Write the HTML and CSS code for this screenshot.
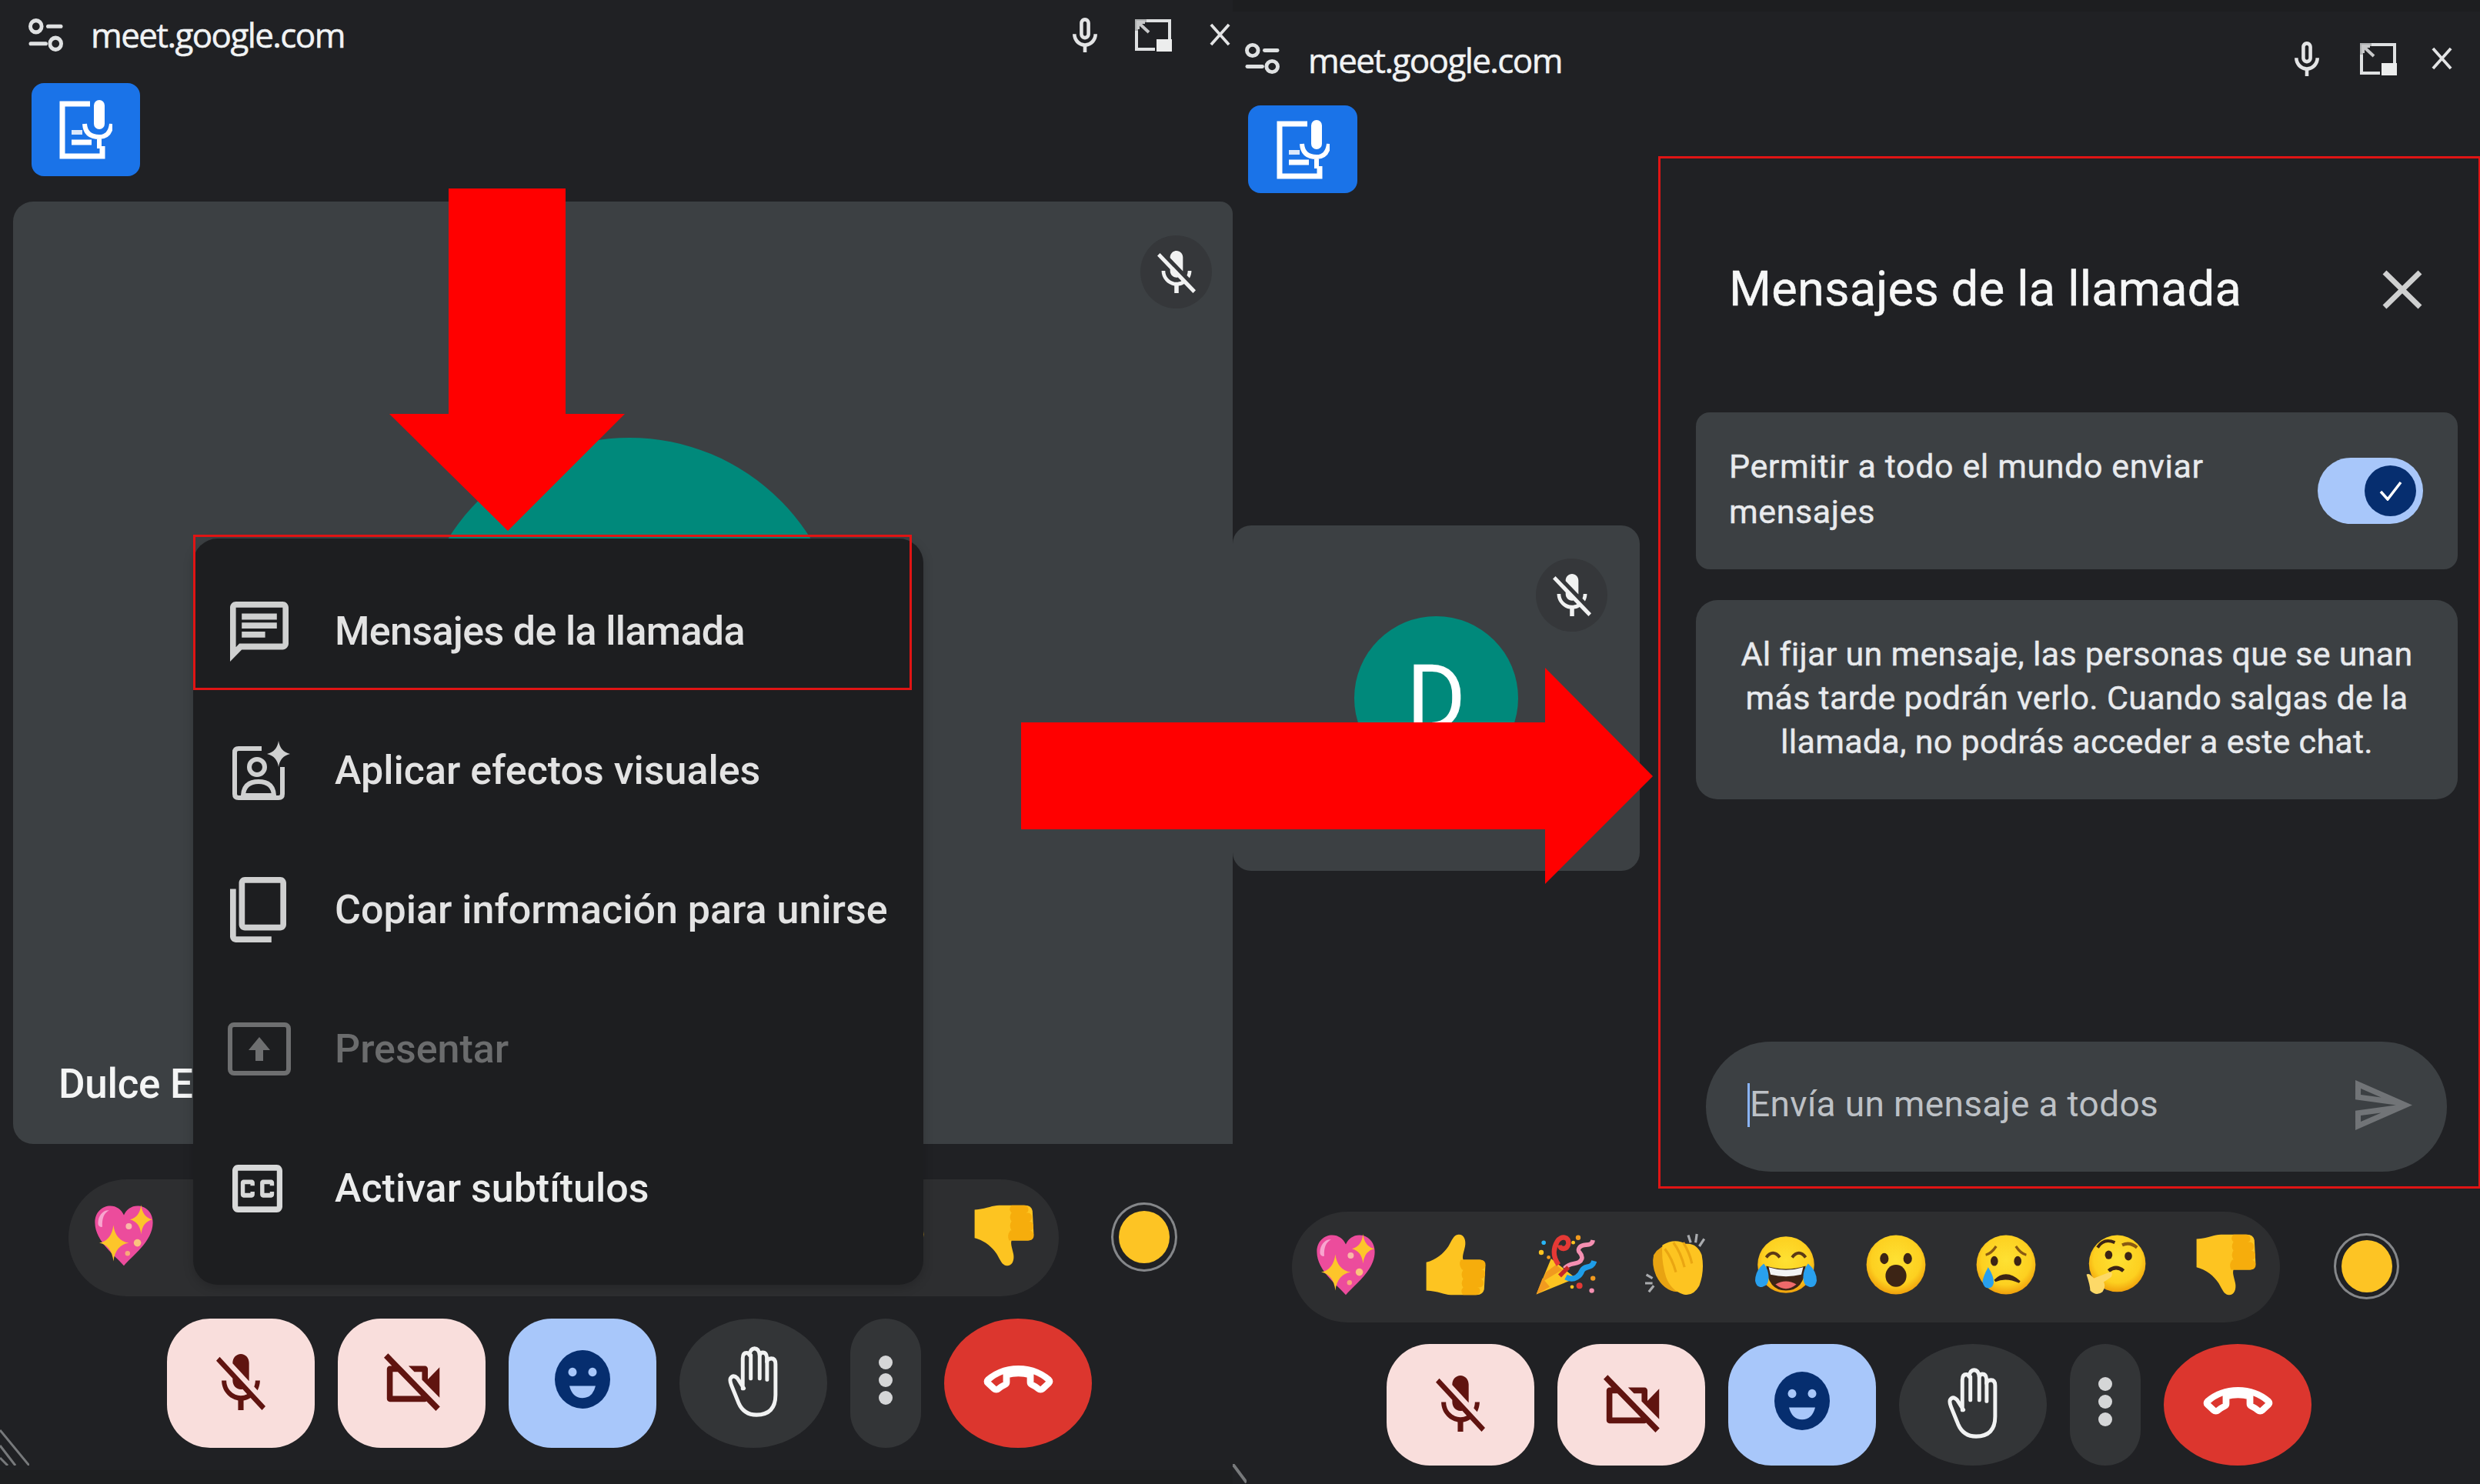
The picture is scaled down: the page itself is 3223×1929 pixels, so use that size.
FILE: index.html
```html
<!DOCTYPE html>
<html lang="es">
<head>
<meta charset="utf-8">
<title>Mensajes de la llamada</title>
<link rel="stylesheet" href="styles.css">
</head>
<body>
<svg class="sprite" aria-hidden="true">
  <defs>
    <radialGradient id="face" cx="50%" cy="42%" r="58%">
      <stop offset="0" stop-color="#fee133"/><stop offset=".72" stop-color="#fdd020"/><stop offset="1" stop-color="#f0a10c"/>
    </radialGradient>
    <g id="i-tune" fill="none" stroke="#dfe1e2" stroke-width="5" stroke-linecap="round">
      <circle cx="10" cy="11" r="7.5"/><path d="M26 11H43"/><path d="M3 33H23"/><circle cx="36" cy="33" r="7.5"/>
    </g>
    <path id="i-mic" d="M12 14c1.66 0 3-1.34 3-3V5c0-1.66-1.34-3-3-3S9 3.34 9 5v6c0 1.66 1.34 3 3 3zm-1-9c0-.55.45-1 1-1s1 .45 1 1v6c0 .55-.45 1-1 1s-1-.45-1-1V5zm6 6c0 2.76-2.24 5-5 5s-5-2.24-5-5H5c0 3.53 2.61 6.43 6 6.92V21h2v-3.08c3.39-.49 6-3.39 6-6.92h-2z"/>
    <g id="i-expand">
      <path d="M16 3H46V27M3 16V40H27" fill="none" stroke="#dfe1e2" stroke-width="4"/>
      <rect x="29" y="27" width="20" height="16" fill="#eceded"/>
      <path d="M3 16V3H16" fill="none" stroke="#aeb0b1" stroke-width="4"/>
      <path d="M5 5L19 18M5 14V5H14" fill="none" stroke="#c8c9ca" stroke-width="4"/>
    </g>
    <path id="i-x" d="M3 3L27 29M27 3L3 29" fill="none" stroke="#e3e4e5" stroke-width="4"/>
    <g id="i-report" fill="none" stroke="#fff">
      <path d="M40 5H4V73H56V60" stroke-width="7"/>
      <path d="M16 42H30" stroke="#dbe8fb" stroke-width="6"/><path d="M16 55H42" stroke-width="7"/>
      <rect x="45" y="0" width="14" height="38" rx="7" fill="#fff" stroke="none"/>
      <path d="M33 31Q34 48 52 48Q66 48 68 31M52 48V63" stroke-width="6"/>
    </g>
    <path id="i-micoff" d="M19 11h-1.7c0 .74-.16 1.43-.43 2.05l1.23 1.23c.56-.98.9-2.09.9-3.28zm-4.02.17c0-.06.02-.11.02-.17V5c0-1.66-1.34-3-3-3S9 3.34 9 5v.18l5.98 5.99zM4.27 3L3 4.27l6.01 6.01V11c0 1.66 1.33 3 2.99 3 .22 0 .44-.03.65-.08l1.66 1.66c-.71.33-1.5.52-2.31.52-2.76 0-5.3-2.1-5.3-5.1H5c0 3.41 2.72 6.23 6 6.72V21h2v-3.28c.91-.13 1.77-.45 2.54-.9L19.73 21 21 19.73 4.27 3z"/>
    <path id="i-camoff" d="M9.56 8l-2-2-4.15-4.14L2 3.27 4.73 6H4c-.55 0-1 .45-1 1v10c0 .55.45 1 1 1h12c.21 0 .39-.08.55-.18L19.73 21l1.41-1.41-8.86-8.86L9.56 8zM5 16V8h1.73l8 8H5zm10-8v2.61l6 6V6.5l-4 4V7c0-.55-.45-1-1-1h-5.61l2 2H15z"/>
    <g id="i-smile">
      <circle cx="36" cy="36" r="36" fill="#062e6f"/>
      <circle cx="23" cy="27" r="5.5" fill="#a8c7fa"/><circle cx="49" cy="27" r="5.5" fill="#a8c7fa"/>
      <path d="M19 44H53Q49 59 36 59Q23 59 19 44Z" fill="#a8c7fa"/>
    </g>
    <g id="i-hand" fill="none" stroke="#f1f2f2" stroke-width="1.8" stroke-linecap="round" stroke-linejoin="round">
      <path d="M7.5 19L4.5 14.5Q2.5 12.6 1.2 14.5Q.8 15.6 1.6 17.5L5 25.5Q7.5 31 13.5 31Q22.5 31 22.5 22V8Q22.5 5.5 20.5 5.5Q18.8 5.5 18.4 7V5Q18.2 2.8 16.5 2.8Q15.4 2.8 15 4Q14.6 1 12.6 1Q10.6 1 10.2 4Q9.8 3 8.8 3Q7 3 7 5.5V19"/>
      <path d="M10.8 4V14.5M15 4V14.5M18.5 7V15"/>
    </g>
    <path id="i-end" d="M12 9c-1.6 0-3.15.25-4.6.72v3.1c0 .39-.23.74-.56.9-.98.49-1.87 1.12-2.66 1.85-.18.18-.43.28-.7.28-.28 0-.53-.11-.71-.29L.29 13.08c-.18-.17-.29-.42-.29-.7 0-.28.11-.53.29-.71C3.34 8.78 7.46 7 12 7s8.66 1.78 11.71 4.67c.18.18.29.43.29.71 0 .28-.11.53-.29.71l-2.48 2.48c-.18.18-.43.29-.71.29-.27 0-.52-.11-.7-.28-.79-.74-1.68-1.36-2.66-1.85-.33-.16-.56-.5-.56-.9v-3.1C15.15 9.25 13.6 9 12 9z"/>

    <!-- emoji -->
    <g id="e-heart">
      <path d="M50 99C38 84 3 60 3 29C3 12 15 2 28 2C38 2 46 8 50 17C54 8 62 2 72 2C85 2 97 12 97 29C97 60 62 84 50 99Z" fill="#ec4c9c"/>
      <path d="M8 30C8 18 16 8 26 9C18 13 14 22 15 36C11 37 8 34 8 30Z" fill="#f8a5cf"/>
      <path d="M33 33Q36 58 58 62Q36 66 33 92Q30 66 10 62Q30 58 33 33Z" fill="#fdc52a"/>
      <path d="M78 0Q80 20 96 24Q80 28 78 48Q76 28 60 24Q76 20 78 0Z" fill="#fdc52a"/>
      <circle cx="58" cy="35" r="5" fill="#f9b9a8"/><circle cx="72" cy="62" r="6" fill="#fbc37e"/><circle cx="56" cy="79" r="4" fill="#f9a97b"/>
    </g>
    <g id="e-thumb">
      <path d="M2 46C18 42 30 32 38 20C44 10 46 2 54 1C63 0 67 10 65 20C63 30 60 36 62 42H88Q98 42 98 52L96 90Q94 99 84 99H42C30 99 22 93 2 92Z" fill="#fdc421"/>
      <path d="M58 42H90Q99 43 98 51Q97 58 90 58H60Q54 50 58 42ZM62 58H93Q99 60 97 68Q95 73 90 73H62Q57 66 62 58ZM62 73H90Q96 74 95 82Q93 87 88 87H62Q57 80 62 73ZM62 87H85Q91 88 89 95Q87 99 82 99H62Q56 93 62 87Z" fill="#f6ad0c"/>
    </g>
    <g id="e-thumbdown"><use href="#e-thumb" transform="matrix(1 0 0 -1 0 100)"/></g>
    <g id="e-party">
      <path d="M2 98L26 40L66 72Z" fill="#fdc421"/><path d="M11 78L44 58L34 50L18 62ZM2 98L24 86L12 72Z" fill="#f19a1f"/>
      <path d="M38 50C28 36 30 22 36 12C42 2 56 4 54 16C52 26 40 26 40 18" fill="none" stroke="#e53935" stroke-width="8"/>
      <path d="M48 56C56 44 72 52 76 40C78 30 66 30 72 22C78 14 92 22 94 10" fill="none" stroke="#f48fb1" stroke-width="7"/>
      <path d="M50 70C64 78 74 66 76 60C80 50 92 58 96 44" fill="none" stroke="#1e9de8" stroke-width="9"/>
      <path d="M40 68L54 54" stroke="#c62828" stroke-width="7"/>
      <circle cx="14" cy="14" r="3.500" fill="#29b6f6"/><circle cx="10" cy="30" r="4" fill="#fdc421"/><circle cx="22" cy="38" r="3" fill="#f19a1f"/>
      <circle cx="70" cy="6" r="4" fill="#f19a1f"/><circle cx="62" cy="14" r="3" fill="#fdc421"/>
      <circle cx="72" cy="84" r="5" fill="#e53935"/><circle cx="92" cy="92" r="4" fill="#f48fb1"/><circle cx="94" cy="72" r="4" fill="#f19a1f"/><circle cx="60" cy="86" r="3" fill="#fdc421"/>
    </g>
    <g id="e-clap">
      <path d="M14 34Q28 12 50 20L62 60L52 94Q30 92 18 68Q10 50 14 34Z" fill="#e8a312"/>
      <path d="M28 18Q48 6 66 16Q84 14 92 34Q97 60 88 84Q78 102 62 98Q42 92 34 70Q26 44 28 18Z" fill="#fdc421"/>
      <path d="M32 24Q44 40 50 62M46 14Q58 30 64 54M62 14Q72 30 76 48" fill="none" stroke="#eaa612" stroke-width="4"/>
      <path d="M70 2L74 14M84 0L82 14M96 8L88 20M2 66L12 72M0 80L12 80M6 94L14 84" stroke="#a9abae" stroke-width="4" fill="none"/>
    </g>
    <g id="e-joy">
      <circle cx="50" cy="50" r="46" fill="url(#face)"/>
      <path d="M18 38Q29 24 40 38M60 38Q71 24 82 38" fill="none" stroke="#5c3a16" stroke-width="5"/>
      <path d="M18 52Q50 62 82 52Q80 92 50 92Q20 92 18 52Z" fill="#3c2415"/>
      <path d="M22 54Q50 63 78 54L75 66Q50 72 25 66Z" fill="#f3f3f3"/>
      <path d="M33 82Q50 72 67 82Q50 96 33 82Z" fill="#ee6a6a"/>
      <path d="M14 48Q0 60 0 76Q2 88 12 86Q22 84 22 70Q22 58 14 48Z" fill="#29a0ee"/>
      <path d="M86 48Q100 60 100 76Q98 88 88 86Q78 84 78 70Q78 58 86 48Z" fill="#29a0ee"/>
    </g>
    <g id="e-wow">
      <circle cx="50" cy="50" r="48" fill="url(#face)"/>
      <ellipse cx="31" cy="40" rx="7" ry="9" fill="#3c2415"/><ellipse cx="69" cy="40" rx="7" ry="9" fill="#3c2415"/>
      <ellipse cx="50" cy="68" rx="17" ry="18" fill="#3c2415"/>
    </g>
    <g id="e-cry">
      <circle cx="50" cy="50" r="48" fill="url(#face)"/>
      <path d="M17 34Q26 32 34 20M83 34Q74 32 66 20" fill="none" stroke="#8a5a12" stroke-width="4"/>
      <ellipse cx="31" cy="44" rx="6" ry="8" fill="#3c2415"/><ellipse cx="69" cy="44" rx="6" ry="8" fill="#3c2415"/>
      <path d="M32 76Q50 58 72 78Q50 68 32 76Z" fill="#3c2415" stroke="#3c2415" stroke-width="4"/>
      <path d="M21 54Q12 70 12 78Q14 88 22 88Q30 86 30 78Q30 68 21 54Z" fill="#29a0ee"/>
    </g>
    <g id="e-think">
      <circle cx="52" cy="48" r="46" fill="url(#face)"/>
      <path d="M20 22Q30 6 48 14" fill="none" stroke="#3c2415" stroke-width="5"/>
      <path d="M60 18Q72 12 84 22" fill="none" stroke="#8a5a12" stroke-width="5"/>
      <ellipse cx="38" cy="34" rx="6" ry="7" fill="#3c2415"/><ellipse cx="70" cy="36" rx="6" ry="7" fill="#3c2415"/>
      <path d="M38 60Q50 50 62 60" fill="none" stroke="#3c2415" stroke-width="6"/>
      <path d="M2 66Q6 62 14 72L40 62Q46 62 42 70L30 78Q34 86 28 94Q18 102 8 92Q8 84 2 66Z" fill="#fdd968"/>
    </g>
  </defs>
</svg>

<!-- left window -->
<section class="win win--left">
  <header class="title title--left">
    <svg class="ic-tune" viewBox="0 0 46 44" preserveAspectRatio="none"><use href="#i-tune"/></svg>
    <span class="host host--left">meet.google.com</span>
    <div class="title-tools title-tools--left">
      <svg class="ic-topmic" viewBox="5 2 14 19" preserveAspectRatio="none"><use href="#i-mic"/></svg>
      <svg class="ic-expand" viewBox="0 0 49 43" preserveAspectRatio="none"><use href="#i-expand"/></svg>
      <svg class="ic-close" viewBox="0 0 30 32" preserveAspectRatio="none"><use href="#i-x"/></svg>
    </div>
  </header>
  <div class="report report--left">
    <svg class="ic-report" viewBox="0 0 69 77"><use href="#i-report"/></svg>
  </div>
  <div class="tile tile--left">
    <div class="avatar avatar--left"></div>
    <div class="chip chip--left"><svg class="ic-chip" viewBox="3 2 18 19" preserveAspectRatio="none"><use href="#i-micoff"/></svg></div>
    <div class="name">Dulce E</div>
  </div>
  <div class="react-row react-row--left">
    <div class="emoji-bar emoji-bar--left">
      <svg class="emoji" viewBox="0 0 100 100"><use href="#e-heart"/></svg>
      <svg class="emoji" viewBox="0 0 100 100"><use href="#e-thumb"/></svg>
      <svg class="emoji" viewBox="0 0 100 100"><use href="#e-party"/></svg>
      <svg class="emoji" viewBox="0 0 100 100"><use href="#e-clap"/></svg>
      <svg class="emoji" viewBox="0 0 100 100"><use href="#e-joy"/></svg>
      <svg class="emoji" viewBox="0 0 100 100"><use href="#e-wow"/></svg>
      <svg class="emoji" viewBox="0 0 100 100"><use href="#e-cry"/></svg>
      <svg class="emoji" viewBox="0 0 100 100"><use href="#e-think"/></svg>
      <svg class="emoji" viewBox="0 0 100 100"><use href="#e-thumbdown"/></svg>
    </div>
    <div class="tone tone--left"><span class="tone-fill"></span></div>
  </div>
  <div class="controls controls--left">
    <div class="btn btn--pink"><svg class="ic-micoff" viewBox="3 2 18 19" preserveAspectRatio="none"><use href="#i-micoff"/></svg></div>
    <div class="btn btn--pink"><svg class="ic-camoff" viewBox="2 1.8 19.2 19.2" preserveAspectRatio="none"><use href="#i-camoff"/></svg></div>
    <div class="btn btn--blue"><svg class="ic-smile" viewBox="0 0 72 72" preserveAspectRatio="none"><use href="#i-smile"/></svg></div>
    <div class="btn btn--dark btn--round"><svg class="ic-hand" viewBox="0 0 24 32" preserveAspectRatio="none"><use href="#i-hand"/></svg></div>
    <div class="btn btn--dark btn--more"><span class="dots"><i></i><i></i><i></i></span></div>
    <div class="btn btn--red btn--round"><svg class="ic-end" viewBox="0 6 24 11" preserveAspectRatio="none"><use href="#i-end"/></svg></div>
  </div>
  <div class="bottom-strip"></div>
  <svg class="grip grip--left" viewBox="0 0 38 48"><path d="M0 2L38 48M0 22L20 48M0 38L10 48" fill="none" stroke="#77797b" stroke-width="3"/></svg>

  <nav class="menu">
    <div class="menu-item menu-item--tight">
      <span class="menu-icon"><svg class="m-chat" viewBox="2 2 20 20" preserveAspectRatio="none"><path fill="#cfd0d0" d="M20 2H4c-1.100 0-2 .9-2 2v18l4-4h14c1.100 0 2-.9 2-2V4c0-1.100-.9-2-2-2zm0 14H5.170L4 17.170V4h16v12zM6 12h8v2H6zm0-3h12v2H6zm0-3h12v2H6z"/></svg></span>
      <span>Mensajes de la llamada</span>
    </div>
    <div class="menu-item">
      <span class="menu-icon"><svg class="m-fx" viewBox="0 0 75 77"><g fill="none" stroke="#cfd0d0" stroke-width="6"><path d="M38 10H8Q3 10 3 15V69Q3 74 8 74H60Q65 74 65 69V34"/><circle cx="32" cy="34" r="10"/><path d="M14 71Q15 53 34 53Q53 53 54 71Z"/></g><path d="M60 0Q62 14 75 17Q62 20 60 34Q58 20 45 17Q58 14 60 0Z" fill="#cfd0d0"/></svg></span>
      <span>Aplicar efectos visuales</span>
    </div>
    <div class="menu-item">
      <span class="menu-icon"><svg class="m-copy" viewBox="2 1 19 22" preserveAspectRatio="none"><path fill="#cfd0d0" d="M4 5H2v16c0 1.100.9 2 2 2h12v-2H4V5zm3-4c-1.100 0-2 .9-2 2v14c0 1.100.9 2 2 2h12c1.100 0 2-.9 2-2V3c0-1.100-.9-2-2-2H7zm0 2h12v14H7V3z"/></svg></span>
      <span>Copiar información para unirse</span>
    </div>
    <div class="menu-item menu-item--off">
      <span class="menu-icon"><svg class="m-present" viewBox="0 0 82 69" preserveAspectRatio="none"><rect x="3" y="3" width="76" height="63" rx="5" fill="none" stroke="#6e6f70" stroke-width="6"/><path d="M41 19L55 36H46V50H36V36H27Z" fill="#6e6f70"/></svg></span>
      <span>Presentar</span>
    </div>
    <div class="menu-item menu-item--bright">
      <span class="menu-icon"><svg class="m-cc" viewBox="3 4 18 16" preserveAspectRatio="none"><path fill="#d8d9d9" d="M19 4H5c-1.110 0-2 .9-2 2v12c0 1.100.89 2 2 2h14c1.100 0 2-.9 2-2V6c0-1.100-.9-2-2-2zm0 14H5V6h14v12zM7 15h3c.55 0 1-.45 1-1v-1H9.500v.5h-2v-3h2v.5H11v-1c0-.55-.45-1-1-1H7c-.55 0-1 .45-1 1v4c0 .55.45 1 1 1zm7 0h3c.55 0 1-.45 1-1v-1h-1.500v.5h-2v-3h2v.5H18v-1c0-.55-.45-1-1-1h-3c-.55 0-1 .45-1 1v4c0 .55.45 1 1 1z"/></svg></span>
      <span>Activar subtítulos</span>
    </div>
    <div class="menu-mark"></div>
  </nav>
</section>

<!-- right window -->
<section class="win win--right">
  <div class="top-strip"></div>
  <header class="title title--right">
    <svg class="ic-tune ic-tune--right" viewBox="0 0 46 44" preserveAspectRatio="none"><use href="#i-tune"/></svg>
    <span class="host host--right">meet.google.com</span>
    <div class="title-tools title-tools--right">
      <svg class="ic-topmic" viewBox="5 2 14 19" preserveAspectRatio="none"><use href="#i-mic"/></svg>
      <svg class="ic-expand" viewBox="0 0 49 43" preserveAspectRatio="none"><use href="#i-expand"/></svg>
      <svg class="ic-close" viewBox="0 0 30 32" preserveAspectRatio="none"><use href="#i-x"/></svg>
    </div>
  </header>
  <div class="main">
    <div class="side">
      <div class="report report--right">
        <svg class="ic-report" viewBox="0 0 69 77"><use href="#i-report"/></svg>
      </div>
      <div class="tile tile--right">
        <div class="avatar avatar--right">D</div>
        <div class="chip chip--right"><svg class="ic-chip" viewBox="3 2 18 19" preserveAspectRatio="none"><use href="#i-micoff"/></svg></div>
      </div>
    </div>
    <aside class="panel">
      <div class="panel-head">
        <h1 class="panel-title">Mensajes de la llamada</h1>
        <svg class="panel-x" viewBox="0 0 54 51" preserveAspectRatio="none"><path d="M4 3L50 48M50 3L4 48" fill="none" stroke="#cfd0d0" stroke-width="7"/></svg>
      </div>
      <div class="card card--toggle">
        <p class="card-text">Permitir a todo el mundo enviar<br>mensajes</p>
        <div class="switch">
          <span class="thumb"><svg class="ic-check" viewBox="0 0 30 26" preserveAspectRatio="none"><path d="M2 14L11 24L28 2" fill="none" stroke="#fff" stroke-width="3.500"/></svg></span>
        </div>
      </div>
      <div class="card card--info">
        <p class="info-text">Al fijar un mensaje, las personas que se unan<br>más tarde podrán verlo. Cuando salgas de la<br>llamada, no podrás acceder a este chat.</p>
      </div>
      <div class="composer">
        <span class="caret"></span>
        <span class="placeholder">Envía un mensaje a todos</span>
        <svg class="ic-send" viewBox="2 3 21 18" preserveAspectRatio="none"><path fill="#717477" d="M4.010 6.030l7.510 3.220-7.520-1 .01-2.220m7.500 8.720L4 17.970v-2.220l7.510-1M2.010 3L2 10l15 2-15 2 .01 7L23 12 2.010 3z"/></svg>
      </div>
    </aside>
  </div>
  <div class="react-row react-row--right">
    <div class="emoji-bar emoji-bar--right">
      <svg class="emoji" viewBox="0 0 100 100"><use href="#e-heart"/></svg>
      <svg class="emoji" viewBox="0 0 100 100"><use href="#e-thumb"/></svg>
      <svg class="emoji" viewBox="0 0 100 100"><use href="#e-party"/></svg>
      <svg class="emoji" viewBox="0 0 100 100"><use href="#e-clap"/></svg>
      <svg class="emoji" viewBox="0 0 100 100"><use href="#e-joy"/></svg>
      <svg class="emoji" viewBox="0 0 100 100"><use href="#e-wow"/></svg>
      <svg class="emoji" viewBox="0 0 100 100"><use href="#e-cry"/></svg>
      <svg class="emoji" viewBox="0 0 100 100"><use href="#e-think"/></svg>
      <svg class="emoji" viewBox="0 0 100 100"><use href="#e-thumbdown"/></svg>
    </div>
    <div class="tone tone--right"><span class="tone-fill"></span></div>
  </div>
  <div class="controls controls--right">
    <div class="btn btn--pink"><svg class="ic-micoff" viewBox="3 2 18 19" preserveAspectRatio="none"><use href="#i-micoff"/></svg></div>
    <div class="btn btn--pink"><svg class="ic-camoff" viewBox="2 1.8 19.2 19.2" preserveAspectRatio="none"><use href="#i-camoff"/></svg></div>
    <div class="btn btn--blue"><svg class="ic-smile" viewBox="0 0 72 72" preserveAspectRatio="none"><use href="#i-smile"/></svg></div>
    <div class="btn btn--dark btn--round"><svg class="ic-hand" viewBox="0 0 24 32" preserveAspectRatio="none"><use href="#i-hand"/></svg></div>
    <div class="btn btn--dark btn--more"><span class="dots"><i></i><i></i><i></i></span></div>
    <div class="btn btn--red btn--round"><svg class="ic-end" viewBox="0 6 24 11" preserveAspectRatio="none"><use href="#i-end"/></svg></div>
  </div>
  <svg class="grip grip--right" viewBox="0 0 18 26"><path d="M0 0L18 24" fill="none" stroke="#77797b" stroke-width="4"/></svg>
</section>

<!-- red annotations drawn over both windows -->
<div class="arrow arrow--down"></div>
<div class="arrow arrow--right"></div>
</body>
</html>
```

FILE: styles.css
```css
* { box-sizing: border-box; }

html, body { margin: 0; padding: 0; }

body {
  position: relative;
  display: flex;
  width: 3223px;
  height: 1929px;
  overflow: hidden;
  background: #202124;
  color: #e8eaed;
  font-family: Roboto, "Noto Sans", sans-serif;
}

.sprite { position: absolute; width: 0; height: 0; }

svg { display: block; flex: none; }

.win {
  position: relative;
  display: flex;
  flex-direction: column;
  height: 1929px;
  flex: none;
}
.win--left { width: 1602px; }
.win--right { width: 1621px; }

/* title bars */
.title { display: flex; align-items: center; flex: none; }
.title--left { height: 90px; padding: 0 2px 0 37px; }
.title--right { height: 122px; padding: 0 35px 0 16px; }
.top-strip { height: 15px; background: #1d1e20; flex: none; }

.ic-tune { width: 45px; height: 45px; fill: #dfe1e2; }
.ic-tune--right { height: 42px; }

.host {
  font-family: "Open Sans", sans-serif;
  font-size: 44px;
  line-height: 50px;
  letter-spacing: -1.6px;
  color: #f1f3f4;
  -webkit-text-stroke: 0.5px #f1f3f4;
}
.host--left { margin-left: 36px; }
.host--right { margin: 4px 0 0 37px; }

.title-tools { margin-left: auto; display: flex; align-items: center; }
.title-tools--left { gap: 48px; }
.title-tools--right { gap: 47px; }
.title-tools--right .ic-topmic { margin-right: 5px; }
.title-tools--right .ic-expand { margin-right: -3px; }

.ic-topmic { width: 32px; height: 45px; fill: #e3e4e5; }
.ic-expand { width: 49px; height: 43px; }
.ic-close { width: 29px; height: 32px; }

/* blue report button */
.report {
  display: flex;
  align-items: center;
  justify-content: center;
  background: #1a73e8;
  border-radius: 16px;
  flex: none;
}
.report--left { width: 141px; height: 121px; margin: 18px 0 0 41px; }
.report--right { width: 142px; height: 114px; margin-left: 20px; }
.ic-report { width: 69px; height: 77px; }

/* video tiles */
.tile {
  position: relative;
  display: flex;
  align-items: center;
  justify-content: center;
  overflow: hidden;
  background: #3c4043;
  flex: none;
}
.tile--left {
  width: 1585px;
  height: 1225px;
  margin: 33px 0 0 17px;
  padding: 0 0 58px 16px;
  border-radius: 26px 16px 0 26px;
}
.tile--right {
  width: 529px;
  height: 449px;
  margin-top: 432px;
  border-radius: 24px;
}

.avatar {
  display: flex;
  align-items: center;
  justify-content: center;
  border-radius: 50%;
  background: #00897b;
  color: #fff;
  flex: none;
}
.avatar--left { width: 554px; height: 554px; }
.avatar--right { width: 213px; height: 213px; font-size: 118px; font-weight: 400; }

.chip {
  position: absolute;
  display: flex;
  align-items: center;
  justify-content: center;
  width: 93px;
  height: 95px;
  border-radius: 50%;
  background: #35373a;
}
.chip--left { top: 44px; right: 27px; }
.chip--right { top: 43px; right: 42px; }
.ic-chip { width: 50px; height: 55px; fill: #f1f2f2; }

.name {
  position: absolute;
  left: 59px;
  bottom: 48px;
  font-size: 53px;
  line-height: 60px;
  font-weight: 500;
  color: #f4f5f5;
  letter-spacing: -0.3px;
  white-space: nowrap;
}

/* reaction rows */
.react-row { display: flex; align-items: center; flex: none; }
.react-row--left { margin: 46px 0 0 89px; }
.react-row--right { margin: 30px 0 0 77px; }

.emoji-bar {
  display: flex;
  align-items: center;
  justify-content: center;
  gap: 63px;
  background: #2d2e30;
  border-radius: 80px;
  padding-bottom: 6px;
  flex: none;
}
.emoji-bar--left { width: 1287px; height: 152px; }
.emoji-bar--right { width: 1284px; height: 144px; }
.emoji { width: 80px; height: 82px; }

.tone {
  display: flex;
  align-items: center;
  justify-content: center;
  border: 3px solid #85878a;
  border-radius: 50%;
  margin-bottom: 3px;
  flex: none;
}
.tone--left { width: 86px; height: 90px; margin-left: 68px; }
.tone--right { width: 85px; height: 86px; margin-left: 70px; }
.tone-fill { display: block; width: 66px; height: 68px; border-radius: 50%; background: #fdc424; }

/* call controls */
.controls { display: flex; gap: 30px; flex: none; }
.controls--left { height: 168px; margin: 29px 0 0 217px; }
.controls--right { height: 158px; margin: 28px 0 0 200px; }

.btn {
  display: flex;
  align-items: center;
  justify-content: center;
  width: 192px;
  border-radius: 56px;
  flex: none;
}
.btn--pink { background: #f9dedc; }
.btn--blue { background: #a8c7fa; }
.btn--dark { background: #333537; }
.btn--red { background: #dc362e; }
.btn--round { border-radius: 50%; }
.btn--more { width: 92px; border-radius: 46px; }

.ic-micoff { width: 64px; height: 73px; fill: #601410; margin-bottom: 4px; }
.ic-camoff { width: 73px; height: 75px; fill: #601410; margin-bottom: 4px; }
.ic-smile { width: 72px; height: 76px; margin-bottom: 10px; }
.ic-hand { width: 66px; height: 92px; margin-bottom: 4px; }
.ic-end { width: 81px; height: 34px; fill: #dc362e; stroke: #fff; stroke-width: 2.600px; margin-bottom: 10px; overflow: visible; }

.dots { display: flex; flex-direction: column; gap: 5px; margin-bottom: 8px; }
.dots i { display: block; width: 18px; height: 18px; border-radius: 50%; background: #d5d6d7; }

.bottom-strip { margin-top: auto; height: 18px; background: #1e1f21; flex: none; }

.grip { position: absolute; }
.grip--left { left: 0; top: 1857px; width: 38px; height: 48px; }
.grip--right { left: 0; top: 1903px; width: 18px; height: 26px; }

/* popup menu */
.menu {
  position: absolute;
  left: 251px;
  top: 700px;
  width: 949px;
  height: 970px;
  padding-top: 30px;
  background: #1d1e20;
  border-radius: 32px;
  box-shadow: 0 4px 14px rgba(0, 0, 0, 0.18);
}
.menu-item {
  display: flex;
  align-items: center;
  height: 181px;
  padding-left: 41px;
  font-size: 52px;
  font-weight: 500;
  color: #e3e3e3;
  white-space: nowrap;
}
.menu-item--tight { letter-spacing: -0.65px; }
.menu-item--off { color: #6b6c6d; }
.menu-item--bright { color: #eceded; }
.menu-icon {
  display: flex;
  align-items: center;
  justify-content: center;
  width: 90px;
  margin-right: 53px;
  flex: none;
}
.m-chat { width: 76px; height: 78px; }
.m-fx { width: 75px; height: 77px; margin-left: 5px; }
.m-copy { width: 73px; height: 85px; margin-left: -3px; }
.m-present { width: 82px; height: 69px; margin-left: -1px; }
.m-cc { width: 65px; height: 62px; margin-left: -5px; }

.menu-mark {
  position: absolute;
  left: 0;
  top: -5px;
  width: 934px;
  height: 202px;
  border: 3px solid #e01414;
}

/* side + panel */
.main { display: flex; height: 1408px; flex: none; }
.side { width: 553px; flex: none; }

.panel {
  display: flex;
  flex-direction: column;
  width: 1068px;
  height: 1342px;
  margin-top: 66px;
  padding: 0 27px 0 46px;
  border: 3px solid #e01414;
  border-right-width: 2px;
  flex: none;
}
.panel-head {
  display: flex;
  align-items: center;
  justify-content: space-between;
  height: 330px;
  padding: 10px 45px 0 43px;
  flex: none;
}
.panel-title {
  margin: 0;
  font-size: 63px;
  line-height: 76px;
  font-weight: 400;
  color: #f6f7f7;
  letter-spacing: 0.25px;
  -webkit-text-stroke: 0.5px #f6f7f7;
  white-space: nowrap;
}
.panel-x { width: 54px; height: 51px; }

.card { background: #3c4043; flex: none; }
.card--toggle {
  display: flex;
  align-items: center;
  justify-content: space-between;
  height: 204px;
  padding: 0 45px 0 43px;
  border-radius: 18px;
}
.card--info {
  display: flex;
  align-items: center;
  justify-content: center;
  height: 259px;
  margin-top: 40px;
  border-radius: 28px;
}
.card-text, .info-text {
  margin: 0;
  font-size: 43px;
  color: #e8eaed;
  -webkit-text-stroke: 0.4px #e8eaed;
}
.card-text { line-height: 59px; letter-spacing: 0.6px; margin-bottom: 4px; }
.info-text { line-height: 57px; text-align: center; letter-spacing: 0.28px; margin-bottom: 4px; }

.switch {
  display: flex;
  align-items: center;
  justify-content: flex-end;
  width: 137px;
  height: 86px;
  padding-right: 9px;
  border-radius: 43px;
  background: #a8c7fa;
  flex: none;
}
.thumb {
  display: flex;
  align-items: center;
  justify-content: center;
  width: 67px;
  height: 66px;
  border-radius: 50%;
  background: #062e6f;
}
.ic-check { width: 30px; height: 26px; }

.composer {
  display: flex;
  align-items: center;
  height: 169px;
  margin: auto 14px 19px 13px;
  padding: 0 45px 0 54px;
  border-radius: 85px;
  background: #3c4043;
  flex: none;
}
.caret { width: 3px; height: 57px; background: #8ab4f8; margin-bottom: 4px; flex: none; }
.placeholder { font-size: 46px; letter-spacing: 0.35px; color: #bdc1c6; white-space: nowrap; margin-bottom: 8px; }
.ic-send { width: 74px; height: 65px; margin: 0 0 4px auto; }

/* big red arrows */
.arrow { position: absolute; background: #ff0000; }
.arrow--down {
  left: 506px;
  top: 245px;
  width: 306px;
  height: 445px;
  clip-path: polygon(77px 0, 229px 0, 229px 293px, 306px 293px, 154px 445px, 0 293px, 77px 293px);
}
.arrow--right {
  left: 1327px;
  top: 868px;
  width: 821px;
  height: 281px;
  clip-path: polygon(0 71px, 681px 71px, 681px 0, 821px 141px, 681px 281px, 681px 210px, 0 210px);
}
```
